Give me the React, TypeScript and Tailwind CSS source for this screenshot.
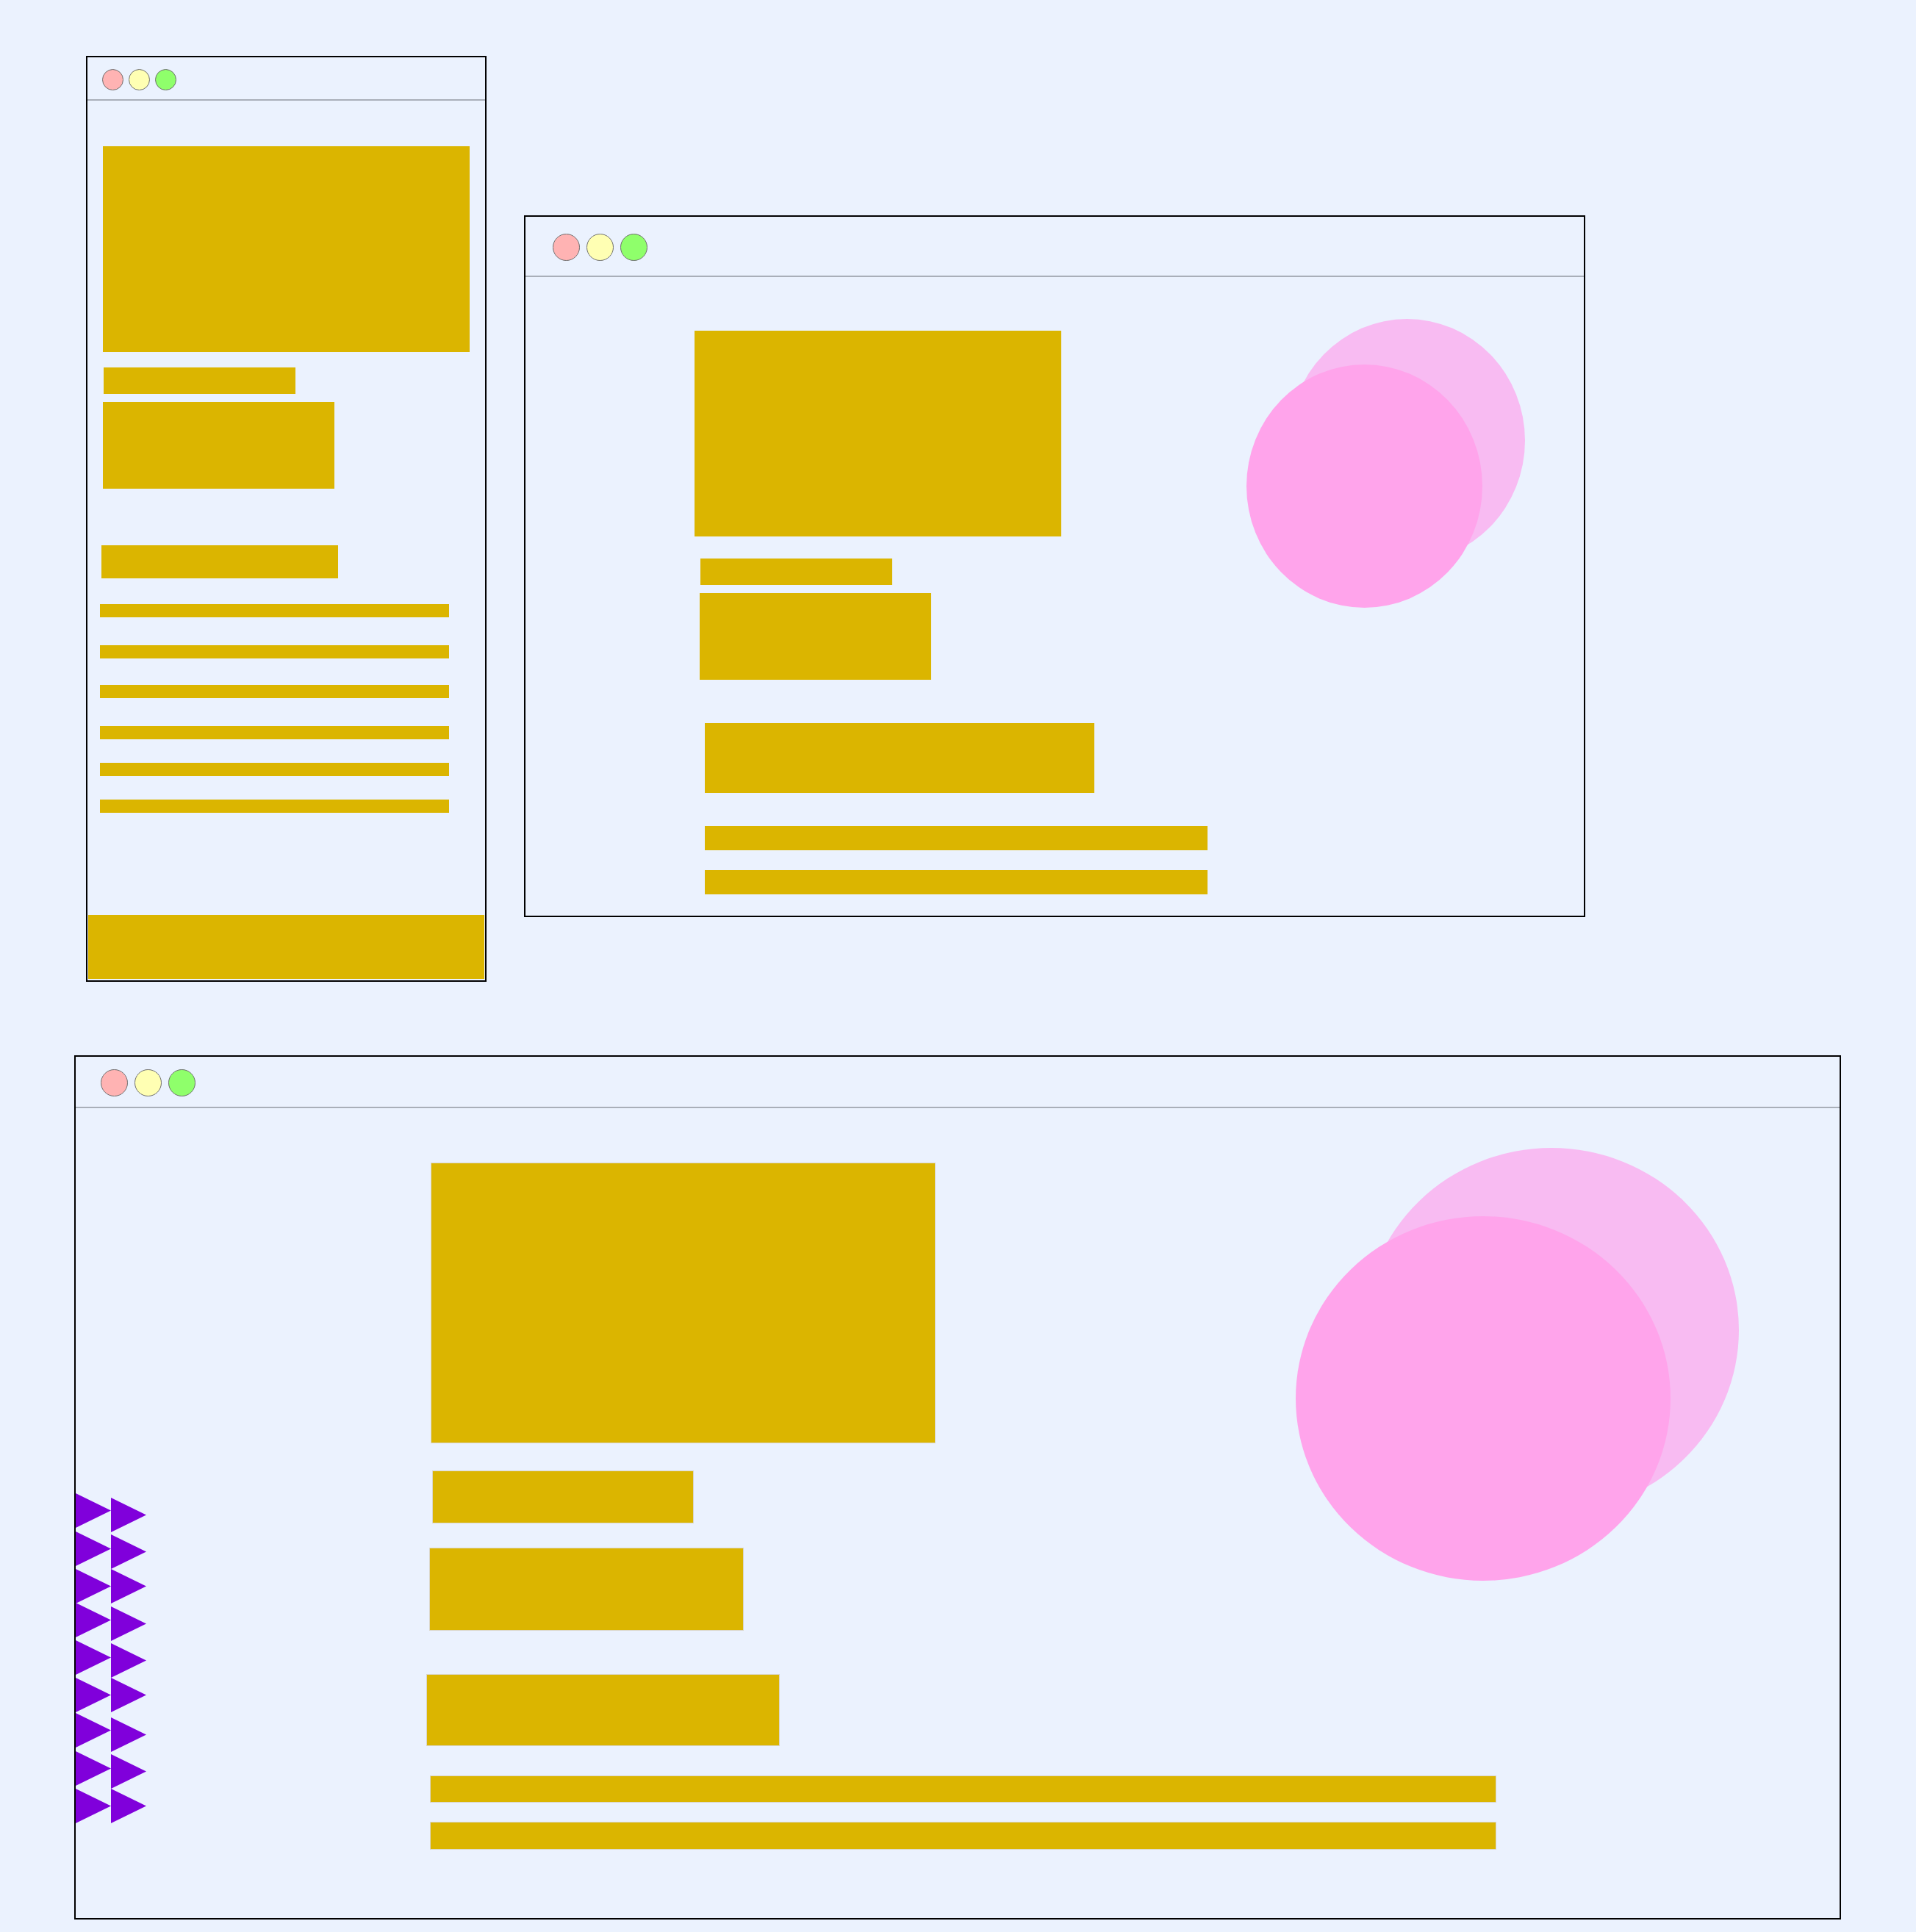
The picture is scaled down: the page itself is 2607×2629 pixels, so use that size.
import type { ReactNode } from "react";

const TRI_COL1 = [0, 52, 103, 149, 200, 251, 299, 351, 402];
const TRI_COL2 = [6, 56, 103, 154, 204, 251, 305, 355, 402];

function Dots({ size, gap, pad }: { size: string; gap: string; pad: string }) {
    const dot = `${size} rounded-full border border-[#6f6f6f]`;
    return (
        <div className={`flex items-center pt-[3px] ${gap} ${pad}`}>
            <div className={`${dot} bg-[#ffb3b3]`} />
            <div className={`${dot} bg-[#ffffb3]`} />
            <div className={`${dot} bg-[#8fff6b]`} />
        </div>
    );
}

function Window({
    box,
    bar,
    dots,
    children
}: {
    box: string;
    bar: string;
    dots: ReactNode;
    children: ReactNode;
}) {
    return (
        <div className={`absolute flex flex-col border-2 border-black bg-[#ebf2fe] ${box}`}>
            <div className={`flex shrink-0 items-center border-b-2 border-[#a9afb9] ${bar}`}>{dots}</div>
            <div className="relative flex flex-1 flex-col">{children}</div>
        </div>
    );
}

function Arrows() {
    return (
        <svg className="absolute left-0 top-[524px]" width="96" height="449" viewBox="0 0 96 449">
            {TRI_COL1.map((y) => (
                <polygon key={`a${y}`} points={`0,${y} 48,${y + 23.5} 0,${y + 47}`} fill="#8000db" />
            ))}
            {TRI_COL2.map((y) => (
                <polygon key={`b${y}`} points={`48,${y} 96,${y + 23.5} 48,${y + 47}`} fill="#8000db" />
            ))}
        </svg>
    );
}

export default function App() {
    const y = "bg-[#dbb500]";
    const yb = "bg-[#dbb500] border border-[#dad6c8]";

    return (
        <div className="relative h-[2629px] w-[2607px] overflow-hidden bg-[#ebf2fe]">
            {/* phone */}
            <Window
                box="left-[117px] top-[76px] w-[545px] h-[1260px]"
                bar="h-[59px]"
                dots={<Dots size="w-[29px] h-[29px]" gap="gap-[7px]" pad="pl-[20px]" />}
            >
                <div className={`mt-[62px] ml-[21px] h-[280px] w-[499px] ${y}`} />
                <div className={`mt-[21px] ml-[22px] h-[36px] w-[261px] ${y}`} />
                <div className={`mt-[11px] ml-[21px] h-[118px] w-[315px] ${y}`} />
                <div className={`mt-[77px] ml-[19px] h-[45px] w-[322px] ${y}`} />
                <div className={`mt-[35px] ml-[17px] h-[18px] w-[475px] ${y}`} />
                <div className={`mt-[38px] ml-[17px] h-[18px] w-[475px] ${y}`} />
                <div className={`mt-[36px] ml-[17px] h-[18px] w-[475px] ${y}`} />
                <div className={`mt-[38px] ml-[17px] h-[18px] w-[475px] ${y}`} />
                <div className={`mt-[32px] ml-[17px] h-[18px] w-[475px] ${y}`} />
                <div className={`mt-[32px] ml-[17px] h-[18px] w-[475px] ${y}`} />
                <div className={`mt-auto mb-[2px] ml-[1px] h-[87px] w-[539px] ${y}`} />
            </Window>

            {/* tablet */}
            <Window
                box="left-[713px] top-[293px] w-[1444px] h-[955px]"
                bar="h-[82px]"
                dots={<Dots size="w-[37px] h-[37px]" gap="gap-[9px]" pad="pl-[37px]" />}
            >
                <div className="absolute left-[1039px] top-[57px] h-[331px] w-[321px] rounded-[50%] bg-[#f8bbf2]" />
                <div className="absolute left-[981px] top-[119px] h-[331px] w-[321px] rounded-[50%] bg-[#ffa4eb]" />
                <div className={`mt-[73px] ml-[230px] h-[280px] w-[499px] ${y}`} />
                <div className={`mt-[30px] ml-[238px] h-[36px] w-[261px] ${y}`} />
                <div className={`mt-[11px] ml-[237px] h-[118px] w-[315px] ${y}`} />
                <div className={`mt-[59px] ml-[244px] h-[95px] w-[530px] ${y}`} />
                <div className={`mt-[45px] ml-[244px] h-[33px] w-[684px] ${y}`} />
                <div className={`mt-[27px] ml-[244px] h-[33px] w-[684px] ${y}`} />
            </Window>

            {/* desktop */}
            <Window
                box="left-[101px] top-[1436px] w-[2404px] h-[1176px]"
                bar="h-[70px]"
                dots={<Dots size="w-[37px] h-[37px]" gap="gap-[9px]" pad="pl-[34px]" />}
            >
                <div className="absolute left-[1753px] top-[54px] h-[496px] w-[510px] rounded-[50%] bg-[#f8bbf2]" />
                <div className="absolute left-[1660px] top-[147px] h-[496px] w-[510px] rounded-[50%] bg-[#ffa4eb]" />
                <Arrows />
                <div className={`mt-[74px] ml-[483px] h-[382px] w-[687px] ${yb}`} />
                <div className={`mt-[37px] ml-[485px] h-[72px] w-[356px] ${yb}`} />
                <div className={`mt-[33px] ml-[481px] h-[113px] w-[428px] ${yb}`} />
                <div className={`mt-[59px] ml-[477px] h-[98px] w-[481px] ${yb}`} />
                <div className={`mt-[40px] ml-[482px] h-[37px] w-[1451px] ${yb}`} />
                <div className={`mt-[26px] ml-[482px] h-[38px] w-[1451px] ${yb}`} />
            </Window>
        </div>
    );
}
